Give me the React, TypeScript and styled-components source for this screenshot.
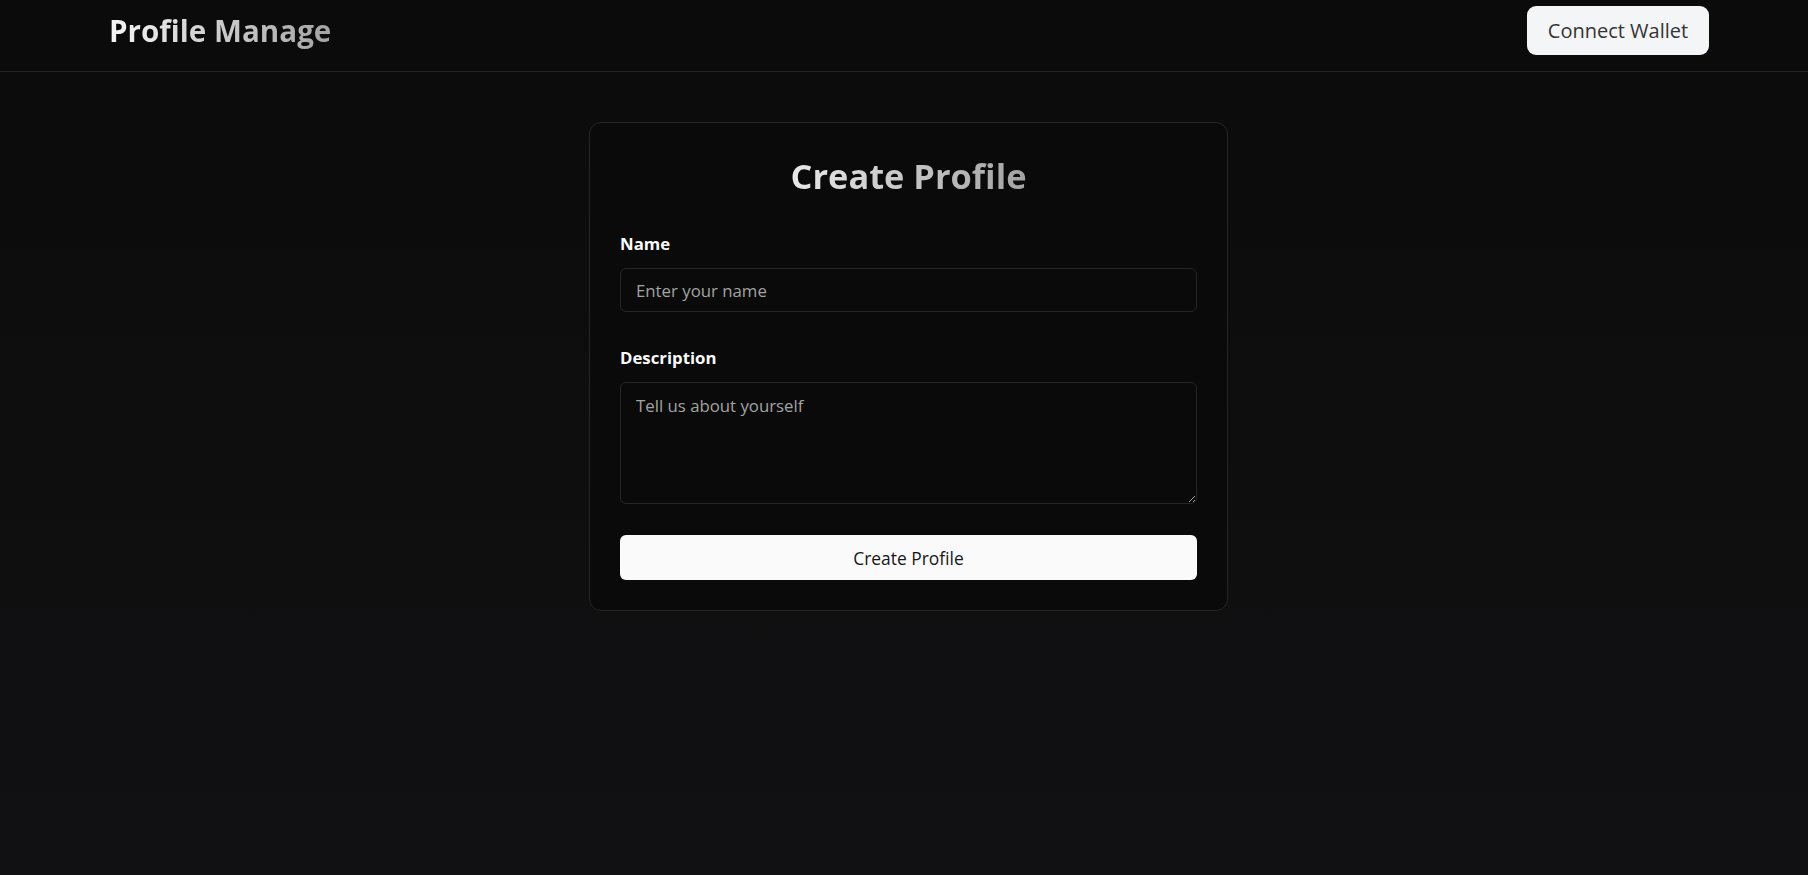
import React from "react";
import styled, { createGlobalStyle } from "styled-components";

const GlobalStyle = createGlobalStyle`
  html, body {
    margin: 0;
    padding: 0;
    background: #0a0a0a;
  }
  body {
    font-family: "Open Sans", "Noto Sans", sans-serif;
    color: #fafafa;
    -webkit-font-smoothing: antialiased;
  }
  * { box-sizing: border-box; }
`;

const Page = styled.div`
  min-height: 875px;
  background: linear-gradient(to bottom, #0b0b0b 0%, #0e0e0f 50%, #111113 100%);
`;

const Header = styled.header`
  background: #0b0b0b;
  border-bottom: 1px solid #262626;
  padding: 6px 99px 16px 109px;
`;

const HeaderRow = styled.div`
  height: 49px;
  display: flex;
  align-items: center;
  justify-content: space-between;
`;

const Brand = styled.h1`
  margin: 0;
  font-size: 29.6px;
  font-weight: 700;
  line-height: 36px;
  background: linear-gradient(to right, #f5f5f5, #a3a3a3);
  -webkit-background-clip: text;
  background-clip: text;
  color: transparent;
`;

const WalletButton = styled.button`
  height: 49px;
  width: 182px;
  border: none;
  border-radius: 9px;
  background: #f4f5f7;
  color: #343434;
  font-family: inherit;
  font-size: 20px;
  font-weight: 500;
  cursor: pointer;
`;

const Main = styled.main`
  padding: 50px 99px 0 108px;
  display: flex;
  justify-content: center;
`;

const Card = styled.section`
  width: 639px;
  background: #0a0a0a;
  border: 1px solid #262626;
  border-radius: 12px;
  padding: 33px 30px 30px;
  display: flex;
  flex-direction: column;
`;

const Title = styled.h2`
  margin: 0 0 34px;
  text-align: center;
  font-size: 34.4px;
  line-height: 40px;
  font-weight: 700;
  background: linear-gradient(to right, #e8e8e8, #a3a3a3);
  -webkit-background-clip: text;
  background-clip: text;
  color: transparent;
  align-self: center;
`;

const Field = styled.div<{ $gap?: number }>`
  display: flex;
  flex-direction: column;
  margin-bottom: ${(p) => p.$gap ?? 32}px;
`;

const Label = styled.label`
  font-size: 16.8px;
  line-height: 28px;
  font-weight: 700;
  color: #fafafa;
  margin-bottom: 10px;
`;

const inputBase = `
  width: 100%;
  background: #0a0a0a;
  border: 1px solid #262626;
  border-radius: 6px;
  color: #fafafa;
  font-family: "Open Sans", "Noto Sans", sans-serif;
  font-size: 16.8px;
  padding: 0 15px;
  outline: none;
  &::placeholder { color: #a3a3a3; }
`;

const TextInput = styled.input`
  ${inputBase}
  height: 44px;
`;

const TextArea = styled.textarea`
  ${inputBase}
  height: 122px;
  padding-top: 9px;
  line-height: 28px;
  resize: vertical;
  display: block;
`;

const SubmitButton = styled.button`
  height: 45px;
  width: 100%;
  border: none;
  border-radius: 6px;
  background: #fafafa;
  color: #171717;
  font-family: inherit;
  font-size: 17.4px;
  font-weight: 500;
  cursor: pointer;
`;

export default function App() {
  return (
    <>
      <GlobalStyle />
      <Page>
        <Header>
          <HeaderRow>
            <Brand>Profile Manage</Brand>
            <WalletButton>Connect Wallet</WalletButton>
          </HeaderRow>
        </Header>
        <Main>
          <Card>
            <Title>Create Profile</Title>
            <Field>
              <Label htmlFor="name">Name</Label>
              <TextInput id="name" placeholder="Enter your name" />
            </Field>
            <Field $gap={31}>
              <Label htmlFor="desc">Description</Label>
              <TextArea id="desc" placeholder="Tell us about yourself" />
            </Field>
            <SubmitButton>Create Profile</SubmitButton>
          </Card>
        </Main>
      </Page>
    </>
  );
}
